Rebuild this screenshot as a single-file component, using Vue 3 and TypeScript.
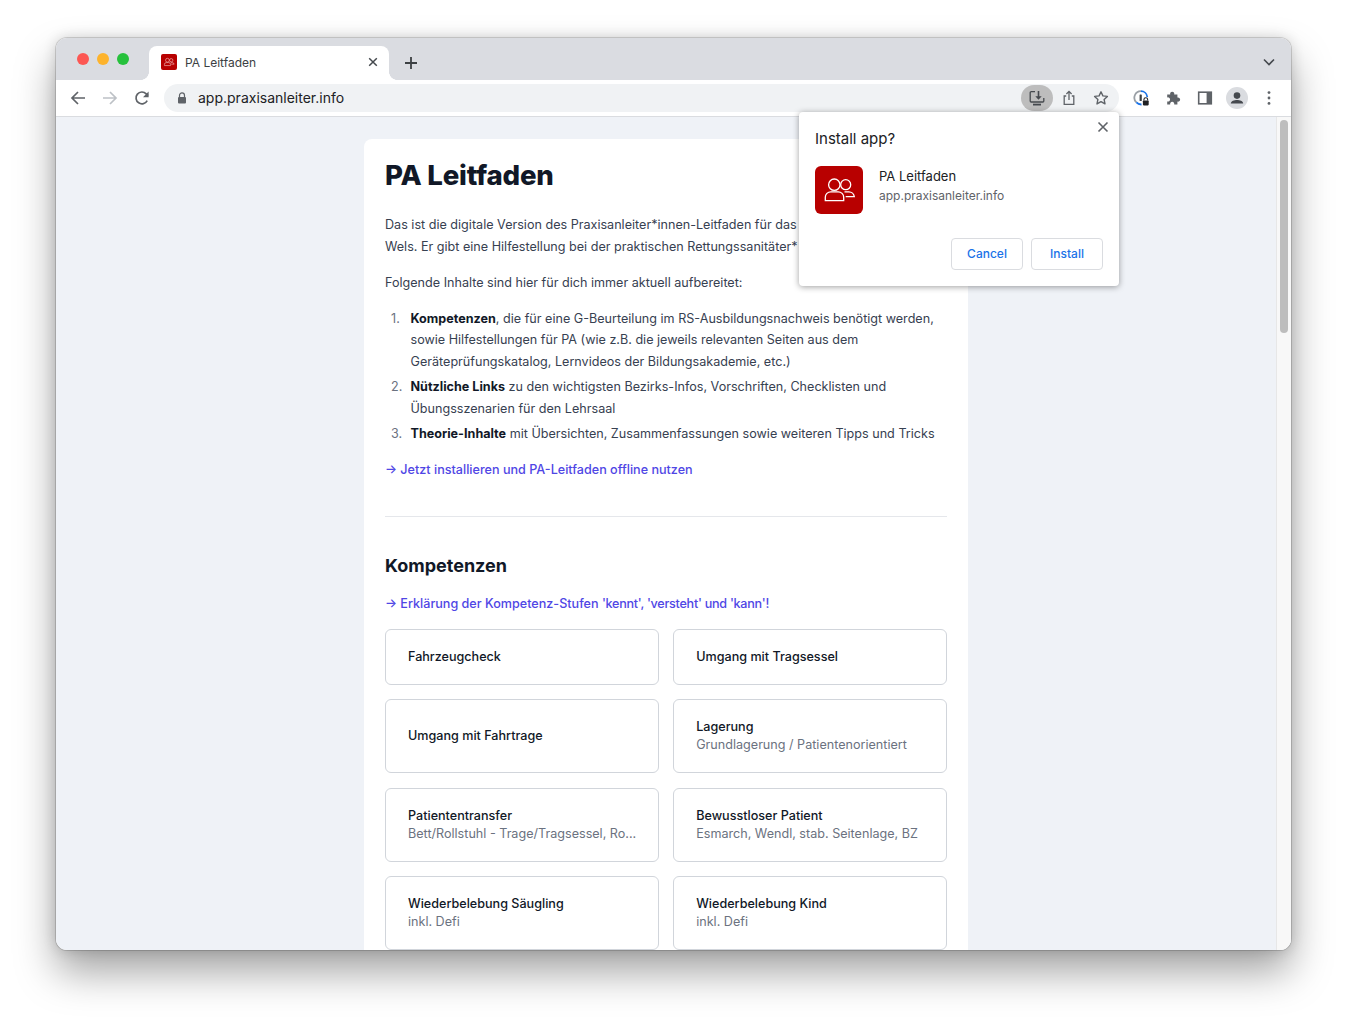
<script setup lang="ts">
interface Kompetenz {
  title: string;
  sub?: string;
}

const kompetenzen: Kompetenz[] = [
  { title: 'Fahrzeugcheck' },
  { title: 'Umgang mit Tragsessel' },
  { title: 'Umgang mit Fahrtrage' },
  { title: 'Lagerung', sub: 'Grundlagerung / Patientenorientiert' },
  { title: 'Patiententransfer', sub: 'Bett/Rollstuhl - Trage/Tragsessel, Ro...' },
  { title: 'Bewusstloser Patient', sub: 'Esmarch, Wendl, stab. Seitenlage, BZ' },
  { title: 'Wiederbelebung Säugling', sub: 'inkl. Defi' },
  { title: 'Wiederbelebung Kind', sub: 'inkl. Defi' },
];
</script>

<template>
  <div class="desktop">
    <div class="window">
      <div class="tabstrip">
        <div class="lights">
          <span class="light red"></span>
          <span class="light yellow"></span>
          <span class="light green"></span>
        </div>
        <div class="tab">
          <svg class="favicon" viewBox="0 0 48 48">
            <rect width="48" height="48" rx="6" fill="#b80000" />
            <g fill="none" stroke="#f0b0b0" stroke-width="2">
              <circle cx="19.3" cy="18.7" r="5.7" />
              <circle cx="30.7" cy="18.7" r="5" />
              <path d="M10.3 34.7v-3.4a5.5 5.5 0 0 1 5.5-5.5h7.4a5.5 5.5 0 0 1 5.5 5.5v3.4z" />
              <path d="M29.5 25.8h4.3a5.5 5.5 0 0 1 5.5 4.8h-8.6" />
            </g>
          </svg>
          <span class="tab-title">PA Leitfaden</span>
          <svg class="tab-close" viewBox="0 0 10 10">
            <path d="M1.2 1.2l7.6 7.6M8.8 1.2L1.2 8.8" stroke="#45494e" stroke-width="1.5" />
          </svg>
        </div>
        <svg class="newtab" viewBox="0 0 14 14">
          <path d="M7 1v12M1 7h12" stroke="#3c4043" stroke-width="1.8" />
        </svg>
        <svg class="chevron" viewBox="0 0 12 8">
          <path d="M1 1.5l5 5 5-5" fill="none" stroke="#45494e" stroke-width="1.6" />
        </svg>
      </div>

      <div class="toolbar">
        <svg class="tool-icon" viewBox="0 0 16 16">
          <path d="M15 8H2.5M8 2L2 8l6 6" fill="none" stroke="#5f6368" stroke-width="1.7" />
        </svg>
        <svg class="tool-icon" viewBox="0 0 16 16">
          <path d="M1 8h12.5M8 2l6 6-6 6" fill="none" stroke="#bdc1c6" stroke-width="1.7" />
        </svg>
        <svg class="tool-icon" viewBox="0 0 16 16">
          <path d="M13.2 10.6A5.9 5.9 0 1 1 12.2 3.8L14 5.6" fill="none" stroke="#5f6368" stroke-width="1.7" />
          <path d="M14.6 1.6v5.6H9z" fill="#5f6368" />
        </svg>
        <div class="omnibox">
          <svg class="lock" viewBox="0 0 10 12">
            <path d="M2.5 5V3.4a2.5 2.5 0 0 1 5 0V5" fill="none" stroke="#5f6368" stroke-width="1.2" />
            <rect x="1" y="5" width="8" height="6.6" rx="1" fill="#5f6368" />
          </svg>
          <span class="url">app.praxisanleiter.info</span>
          <div class="chip">
            <svg width="16" height="16" viewBox="0 0 16 16" fill="none" stroke="#45494e" stroke-width="1.3">
              <path d="M6 1.7H2.2a1 1 0 0 0-1 1V11a1 1 0 0 0 1 1h11.6a1 1 0 0 0 1-1V8" />
              <path d="M4 14.6h8" stroke-width="1.8" />
              <path d="M9.5 1v6.5" stroke-width="1.6" />
              <path d="M6.3 6.2h6.4L9.5 9.8z" fill="#45494e" stroke="none" />
            </svg>
          </div>
          <svg class="omni-icon share" viewBox="0 0 16 16" fill="none" stroke="#5f6368" stroke-width="1.3">
            <path d="M5.2 6H3.2v8.3h9.6V6h-2" />
            <path d="M8 10V1.5M5.4 4L8 1.4 10.6 4" />
          </svg>
          <svg class="omni-icon" viewBox="0 0 16 16">
            <path d="M8 1.8l1.9 4.1 4.5.5-3.3 3 .9 4.5L8 11.6l-4 2.3.9-4.5-3.3-3 4.5-.5z" fill="none" stroke="#5f6368" stroke-width="1.4" stroke-linejoin="round" />
          </svg>
        </div>
        <div class="ext-icons">
          <svg class="ext" viewBox="0 0 16 16">
            <path d="M3.4 12.4A6.5 6.5 0 0 1 7.9 1.2" fill="none" stroke="#9aa0a6" stroke-width="1.8" />
            <path d="M7.9 1.2a6.5 6.5 0 0 1 6.4 5.8" fill="none" stroke="#1a73e8" stroke-width="1.8" />
            <path d="M3.4 12.4A6.5 6.5 0 0 0 8.5 14.5" fill="none" stroke="#1a73e8" stroke-width="1.8" />
            <rect x="6.6" y="4.4" width="2.2" height="6.6" rx=".6" fill="#3c4043" />
            <path d="M10.9 10.6V9.7a1.9 1.9 0 0 1 3.8 0v.9" fill="none" stroke="#202124" stroke-width="1.1" />
            <rect x="9.9" y="10.4" width="5.8" height="5" rx=".8" fill="#202124" />
          </svg>
          <svg class="ext" viewBox="0 0 16 16">
            <path d="M2.2 4.4h3a2.1 2.1 0 1 1 4 0h3.2v3.2a2.1 2.1 0 1 1 0 4v3H9.2a2.1 2.1 0 1 0-4 0h-3v-3.2a2.1 2.1 0 1 0 0-3.9z" fill="#5f6368" />
          </svg>
          <svg class="ext" viewBox="0 0 16 16">
            <rect x="1.7" y="2.2" width="12.6" height="11.6" fill="none" stroke="#5f6368" stroke-width="1.6" />
            <rect x="9.6" y="2.2" width="4.7" height="11.6" fill="#5f6368" />
          </svg>
          <div class="avatar">
            <svg width="22" height="22" viewBox="0 0 22 22">
              <circle cx="11" cy="8.6" r="3.3" fill="#45494e" />
              <path d="M4.8 16.6c0-2.6 3.6-3.6 6.2-3.6s6.2 1 6.2 3.6z" fill="#45494e" />
            </svg>
          </div>
          <svg class="ext dots" viewBox="0 0 4 16">
            <circle cx="2" cy="2.6" r="1.4" fill="#5f6368" />
            <circle cx="2" cy="8" r="1.4" fill="#5f6368" />
            <circle cx="2" cy="13.4" r="1.4" fill="#5f6368" />
          </svg>
        </div>
      </div>

      <div class="viewport">
        <div class="page">
          <main class="card">
            <h1>PA Leitfaden</h1>
            <p class="first">
              Das ist die digitale Version des Praxisanleiter*innen-Leitfaden für das<br />
              Wels. Er gibt eine Hilfestellung bei der praktischen Rettungssanitäter*
            </p>
            <p>Folgende Inhalte sind hier für dich immer aktuell aufbereitet:</p>
            <ol>
              <li>
                <strong>Kompetenzen</strong>, die für eine G-Beurteilung im RS-Ausbildungsnachweis benötigt werden,
                sowie Hilfestellungen für PA (wie z.B. die jeweils relevanten Seiten aus dem
                Geräteprüfungskatalog, Lernvideos der Bildungsakademie, etc.)
              </li>
              <li>
                <strong>Nützliche Links</strong> zu den wichtigsten Bezirks-Infos, Vorschriften, Checklisten und
                Übungsszenarien für den Lehrsaal
              </li>
              <li>
                <strong>Theorie-Inhalte</strong> mit Übersichten, Zusammenfassungen sowie weiteren Tipps und Tricks
              </li>
            </ol>
            <a class="link">→ Jetzt installieren und PA-Leitfaden offline nutzen</a>
            <hr />
            <h2>Kompetenzen</h2>
            <a class="link">→ Erklärung der Kompetenz-Stufen <span class="quoted">'kennt', 'versteht' und 'kann'!</span></a>
            <div class="grid">
              <div v-for="item in kompetenzen" :key="item.title" class="tile">
                <div class="tile-title">{{ item.title }}</div>
                <div v-if="item.sub" class="tile-sub">{{ item.sub }}</div>
              </div>
            </div>
          </main>
        </div>
        <div class="scrollbar"><div class="thumb"></div></div>
      </div>

      <div class="dialog">
        <svg class="dialog-close" viewBox="0 0 12 12">
          <path d="M1.5 1.5l9 9M10.5 1.5l-9 9" stroke="#5f6368" stroke-width="1.6" />
        </svg>
        <div class="dialog-title">Install app?</div>
        <div class="dialog-app">
          <svg class="app-icon" viewBox="0 0 48 48">
            <rect width="48" height="48" rx="6" fill="#b80000" />
            <g fill="none" stroke="#fff" stroke-width="1.3">
              <circle cx="19.3" cy="18.7" r="5.7" />
              <circle cx="30.7" cy="18.7" r="5" />
              <path d="M10.3 34.7v-3.4a5.5 5.5 0 0 1 5.5-5.5h7.4a5.5 5.5 0 0 1 5.5 5.5v3.4z" />
              <path d="M29.5 25.8h4.3a5.5 5.5 0 0 1 5.5 4.8h-8.6" />
            </g>
          </svg>
          <div>
            <div class="app-name">PA Leitfaden</div>
            <div class="app-url">app.praxisanleiter.info</div>
          </div>
        </div>
        <div class="dialog-actions">
          <button class="btn">Cancel</button>
          <button class="btn">Install</button>
        </div>
      </div>
    </div>
  </div>
</template>

<style>
html,
body {
  margin: 0;
  background: #fff;
}
</style>

<style scoped>
.desktop {
  box-sizing: border-box;
  width: 1347px;
  height: 1024px;
  padding: 38px 56px 74px;
  overflow: hidden;
  background: #fff;
  font-family: Inter, "Liberation Sans", sans-serif;
}

.window {
  position: relative;
  display: flex;
  flex-direction: column;
  height: 100%;
  border-radius: 11px;
  box-shadow: 0 22px 40px rgba(0, 0, 0, 0.36), 0 0 14px rgba(0, 0, 0, 0.16), 0 0 0 1px rgba(0, 0, 0, 0.14);
}

.tabstrip {
  position: relative;
  display: flex;
  align-items: flex-end;
  height: 42px;
  flex-shrink: 0;
  background: #dadce1;
  border-radius: 11px 11px 0 0;
}

.lights {
  display: flex;
  gap: 8px;
  align-self: flex-start;
  margin: 15px 0 0 21px;
}

.light {
  width: 12px;
  height: 12px;
  border-radius: 50%;
}

.red { background: #fc5753; }
.yellow { background: #fdb32c; }
.green { background: #26c13c; }

.tab {
  position: relative;
  display: flex;
  align-items: center;
  box-sizing: border-box;
  width: 240px;
  height: 34px;
  margin-left: 20px;
  padding: 0 11px 2px 12px;
  background: #fff;
  border-radius: 8px 8px 0 0;
}

.tab::before,
.tab::after {
  content: "";
  position: absolute;
  bottom: 0;
  width: 8px;
  height: 8px;
  background: radial-gradient(circle at 0 0, transparent 7.6px, #fff 8px);
}

.tab::before {
  left: -8px;
}

.tab::after {
  right: -8px;
  transform: scaleX(-1);
}

.favicon {
  width: 16px;
  height: 16px;
  margin-right: 8px;
}

.tab-title {
  flex: 1;
  font-size: 12px;
  color: #3c4043;
}

.tab-close {
  width: 10px;
  height: 10px;
}

.newtab {
  width: 14px;
  height: 14px;
  margin: 0 0 10px 15px;
}

.chevron {
  width: 12px;
  height: 8px;
  margin: 0 16px 14px auto;
}

.toolbar {
  display: flex;
  align-items: center;
  height: 36px;
  flex-shrink: 0;
  padding-left: 14px;
  background: #fff;
  border-bottom: 1px solid #dadce0;
}

.tool-icon {
  width: 16px;
  height: 16px;
  margin-right: 16px;
}

.omnibox {
  display: flex;
  align-items: center;
  width: 955px;
  height: 28px;
  margin-left: -2px;
  padding-left: 13px;
  box-sizing: border-box;
  background: #f0f2f4;
  border-radius: 14px;
}

.lock {
  width: 10px;
  height: 12px;
  margin-right: 11px;
}

.url {
  flex: 1;
  font-size: 14px;
  line-height: 28px;
  padding-bottom: 1px;
  color: #202124;
}

.chip {
  display: flex;
  align-items: center;
  justify-content: center;
  width: 32px;
  height: 26px;
  background: #bdbdbd;
  border-radius: 13px;
}

.omni-icon {
  width: 16px;
  height: 16px;
  margin-left: 16px;
}

.share {
  margin-left: 8px;
}

.omni-icon:last-child {
  margin-right: 10px;
}

.ext-icons {
  display: flex;
  align-items: center;
  padding-left: 14px;
}

.ext {
  width: 16px;
  height: 16px;
  margin-right: 16px;
}

.dots {
  width: 4px;
  margin: 0 0 0 11px;
}

.avatar {
  width: 22px;
  height: 22px;
  margin-left: -3px;
  margin-right: 8px;
  border-radius: 50%;
  background: #dadce0;
}

.viewport {
  display: flex;
  flex: 1;
  min-height: 0;
  overflow: hidden;
  border-radius: 0 0 11px 11px;
  background: #eff2f7;
}

.page {
  flex: 1;
  display: flex;
  justify-content: center;
  padding-top: 22px;
  min-width: 0;
}

.card {
  box-sizing: border-box;
  width: 604px;
  height: 1000px;
  padding: 20px 21px 0;
  background: #fff;
  border-radius: 8px 8px 0 0;
  font-size: 12.6px;
  line-height: 21.6px;
  color: #374151;
}

h1 {
  margin: 0 0 23px;
  font-size: 27.6px;
  line-height: 32px;
  font-weight: 800;
  letter-spacing: -0.2px;
  color: #111827;
}

p {
  margin: 0 0 14.5px;
}

.first {
  margin-bottom: 13.5px;
  line-height: 22px;
}

ol {
  margin: 0 0 14.5px;
  padding: 0 0 0 25.5px;
  list-style: none;
  counter-reset: item;
}

li {
  position: relative;
  margin-bottom: 3.6px;
  counter-increment: item;
}

li::before {
  content: counter(item) ".";
  position: absolute;
  left: -19.5px;
  color: #6b7280;
}

strong {
  font-weight: 700;
  color: #111827;
}

.link {
  display: block;
  font-weight: 500;
  color: #4f46e5;
}

.quoted {
  letter-spacing: -0.27px;
}

hr {
  margin: 36px 0 37px;
  border: 0;
  border-top: 1px solid #e5e7eb;
}

h2 {
  margin: 0 0 15px;
  font-size: 18px;
  line-height: 24px;
  font-weight: 700;
  color: #111827;
}

.grid {
  display: grid;
  grid-template-columns: 1fr 1fr;
  grid-template-rows: 56px 74px 74px 74px;
  gap: 14.4px 14px;
  margin-top: 13.9px;
}

.tile {
  display: flex;
  flex-direction: column;
  justify-content: center;
  box-sizing: border-box;
  padding: 0 22px;
  border: 1px solid #d1d5db;
  border-radius: 6px;
  line-height: 18px;
}

.tile-title {
  font-weight: 500;
  color: #111827;
}

.tile-sub {
  color: #6b7280;
  white-space: nowrap;
}

.scrollbar {
  box-sizing: border-box;
  flex-shrink: 0;
  width: 15px;
  padding: 3px 3px 0 3px;
  background: #f8f8f8;
  border-left: 1px solid #e7e7e7;
}

.thumb {
  height: 213px;
  border-radius: 4px;
  background: #bdbdbd;
}

.dialog {
  position: absolute;
  left: 743px;
  top: 74px;
  box-sizing: border-box;
  width: 320px;
  height: 174px;
  padding: 16px;
  background: #fff;
  border-radius: 4px;
  box-shadow: 0 1px 6px rgba(0, 0, 0, 0.38);
}

.dialog-close {
  position: absolute;
  top: 9px;
  right: 10px;
  width: 12px;
  height: 12px;
}

.dialog-title {
  font-size: 15px;
  line-height: 22px;
  color: #202124;
}

.dialog-app {
  display: flex;
  align-items: flex-start;
  gap: 16px;
  margin-top: 16px;
}

.app-icon {
  width: 48px;
  height: 48px;
}

.app-name {
  margin-top: 1px;
  font-size: 13px;
  line-height: 19px;
  color: #202124;
}

.app-url {
  font-size: 12px;
  line-height: 19px;
  color: #5f6368;
}

.dialog-actions {
  display: flex;
  justify-content: flex-end;
  gap: 8px;
  margin-top: 24px;
}

.btn {
  width: 72px;
  height: 32px;
  padding: 0 0 2px;
  background: #fff;
  border: 1px solid #dadce0;
  border-radius: 4px;
  font: 500 12px Inter, "Liberation Sans", sans-serif;
  color: #1a73e8;
}
</style>
